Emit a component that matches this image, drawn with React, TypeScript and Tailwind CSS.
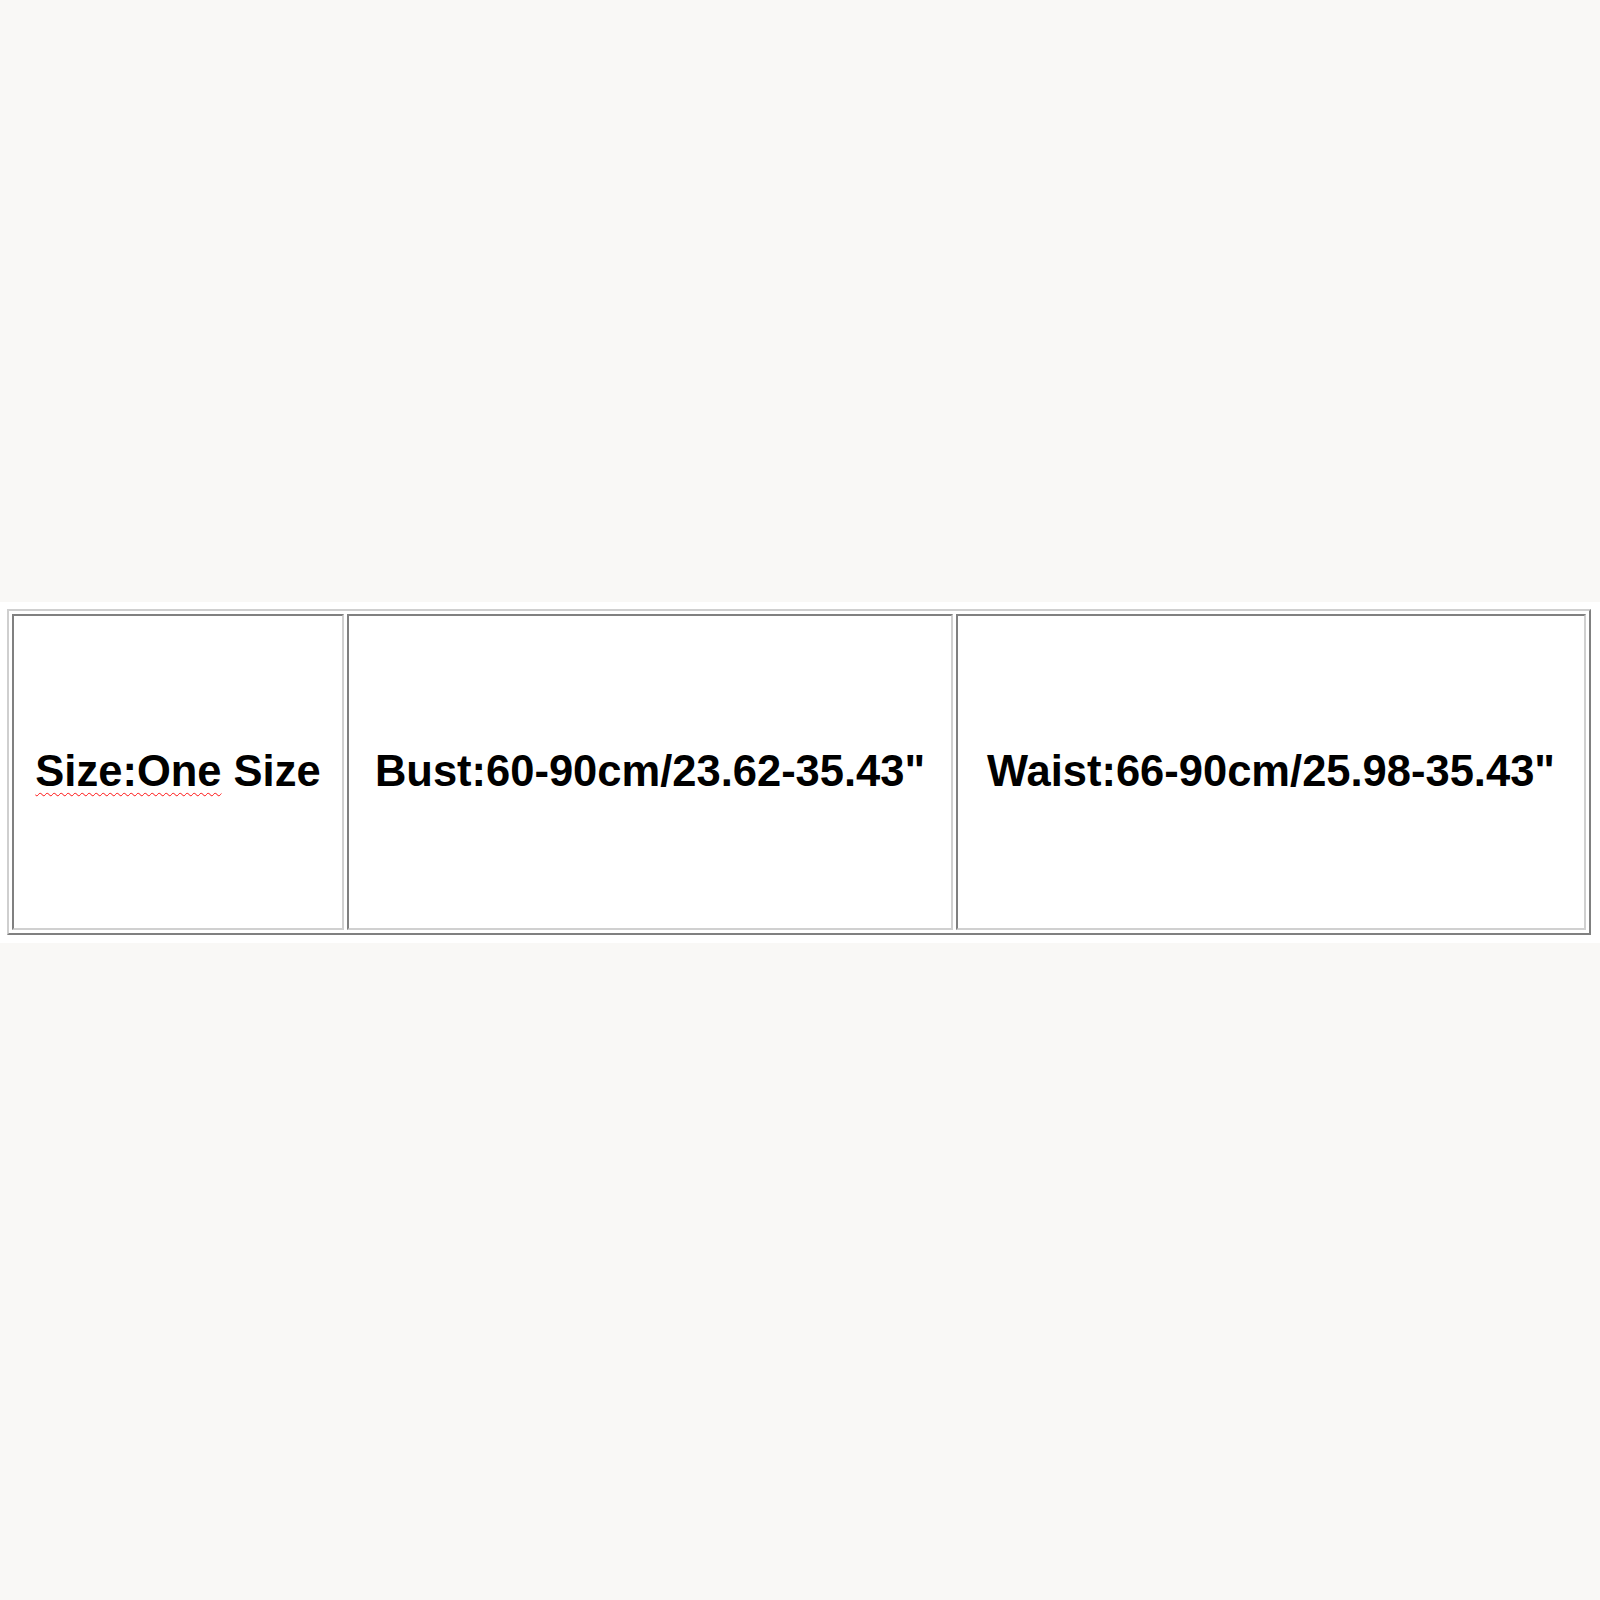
import React from "react";

export default function App() {
  return (
    <div className="w-full h-[1600px] bg-[#f9f8f6] pt-[602px] font-['Liberation_Sans',Arial,sans-serif]">
      <div className="bg-white w-full h-[341px] pt-[7px] pl-[7px]">
        <div className="flex gap-[3px] p-[3px] w-[1584px] h-[326px] border-2 border-t-[#cfcfcf] border-l-[#cfcfcf] border-b-[#808080] border-r-[#808080]">
          <div className="w-[332px] h-full flex items-center justify-center border-2 border-t-[#808080] border-l-[#808080] border-b-[#d0d0d0] border-r-[#d0d0d0]">
            <p className="text-[43.5px] font-bold text-black whitespace-nowrap">
              <span className="underline decoration-wavy decoration-[#ff1010] decoration-[1.2px] underline-offset-[6px]">
                Size:One
              </span>{" "}
              Size
            </p>
          </div>
          <div className="w-[606px] h-full flex items-center justify-center border-2 border-t-[#808080] border-l-[#808080] border-b-[#d0d0d0] border-r-[#d0d0d0]">
            <p className="text-[43.5px] font-bold text-black whitespace-nowrap">
              Bust:60-90cm/23.62-35.43"
            </p>
          </div>
          <div className="w-[630px] h-full flex items-center justify-center border-2 border-t-[#808080] border-l-[#808080] border-b-[#d0d0d0] border-r-[#d0d0d0]">
            <p className="text-[43.5px] font-bold text-black whitespace-nowrap">
              Waist:66-90cm/25.98-35.43"
            </p>
          </div>
        </div>
      </div>
    </div>
  );
}
